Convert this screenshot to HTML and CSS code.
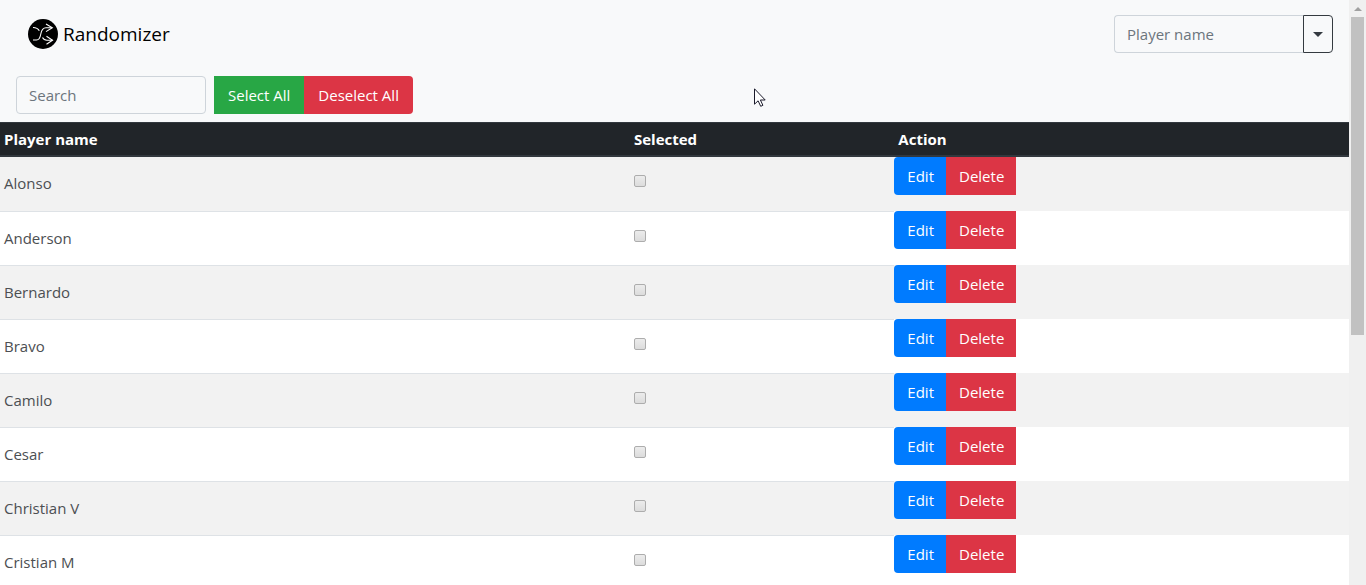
FILE: index.html
```html
<!DOCTYPE html>
<html lang="en">
<head>
<meta charset="utf-8">
<title>Randomizer</title>
<link rel="stylesheet" href="styles.css">
</head>
<body>
<div class="page">
  <header class="navbar">
    <a class="brand" href="#">
      <svg class="logo" viewBox="0 0 30 30" aria-hidden="true">
        <circle cx="15" cy="15" r="15" fill="#000"/>
        <g fill="none" stroke="#fff" stroke-width="1.100">
          <path d="M5 8.500c3 0 5 .8 6.300 3.300"/>
          <path d="M5 21h3.500c3 0 3.700-2.500 4.300-6 .7-4 2-6.200 5.200-6.200h6"/>
          <path d="M14.500 18.500c1 2 2.500 2.700 4.500 2.700h5.500"/>
          <path d="M18 5l6.300 3.800L18 12.600M18.500 17.300l6 3.900-6 4"/>
        </g>
      </svg>
      <span>Randomizer</span>
    </a>
    <form class="input-group">
      <input class="field field-joined" type="text" placeholder="Player name" aria-label="Player name">
      <button class="toggle" type="button" aria-label="More options"><span class="caret"></span></button>
    </form>
  </header>
  <div class="toolbar">
    <input class="field" type="search" placeholder="Search" aria-label="Search">
    <div class="btn-group">
      <button class="btn btn-success" type="button">Select All</button><button class="btn btn-danger btn-end" type="button">Deselect All</button>
    </div>
  </div>
  <table class="players">
    <colgroup><col class="col-name"><col class="col-selected"><col></colgroup>
    <thead>
      <tr><th scope="col">Player name</th><th scope="col">Selected</th><th scope="col">Action</th></tr>
    </thead>
    <tbody>
      <tr><td>Alonso</td><td><input class="check" type="checkbox" aria-label="Select Alonso"></td><td class="actions"><div class="btn-group"><button class="btn btn-primary" type="button">Edit</button><button class="btn btn-danger" type="button">Delete</button></div></td></tr>
      <tr><td>Anderson</td><td><input class="check" type="checkbox" aria-label="Select Anderson"></td><td class="actions"><div class="btn-group"><button class="btn btn-primary" type="button">Edit</button><button class="btn btn-danger" type="button">Delete</button></div></td></tr>
      <tr><td>Bernardo</td><td><input class="check" type="checkbox" aria-label="Select Bernardo"></td><td class="actions"><div class="btn-group"><button class="btn btn-primary" type="button">Edit</button><button class="btn btn-danger" type="button">Delete</button></div></td></tr>
      <tr><td>Bravo</td><td><input class="check" type="checkbox" aria-label="Select Bravo"></td><td class="actions"><div class="btn-group"><button class="btn btn-primary" type="button">Edit</button><button class="btn btn-danger" type="button">Delete</button></div></td></tr>
      <tr><td>Camilo</td><td><input class="check" type="checkbox" aria-label="Select Camilo"></td><td class="actions"><div class="btn-group"><button class="btn btn-primary" type="button">Edit</button><button class="btn btn-danger" type="button">Delete</button></div></td></tr>
      <tr><td>Cesar</td><td><input class="check" type="checkbox" aria-label="Select Cesar"></td><td class="actions"><div class="btn-group"><button class="btn btn-primary" type="button">Edit</button><button class="btn btn-danger" type="button">Delete</button></div></td></tr>
      <tr><td>Christian V</td><td><input class="check" type="checkbox" aria-label="Select Christian V"></td><td class="actions"><div class="btn-group"><button class="btn btn-primary" type="button">Edit</button><button class="btn btn-danger" type="button">Delete</button></div></td></tr>
      <tr><td>Cristian M</td><td><input class="check" type="checkbox" aria-label="Select Cristian M"></td><td class="actions"><div class="btn-group"><button class="btn btn-primary" type="button">Edit</button><button class="btn btn-danger" type="button">Delete</button></div></td></tr>
    </tbody>
  </table>
</div>
<div class="scrollbar" aria-hidden="true">
  <span class="scroll-arrow"></span>
  <span class="scroll-thumb"></span>
</div>
<svg class="cursor" viewBox="0 0 12 19" aria-hidden="true">
  <path d="M.5 .8v15.400l3.600-3.400 2.600 5.500 2.200-1-2.500-5.300h4.800z" fill="#fff" stroke="#1b1b2b"/>
</svg>
</body>
</html>
```
FILE: styles.css
```css
* {
  box-sizing: border-box;
}

body {
  display: flex;
  height: 100vh;
  margin: 0;
  overflow: hidden;
  background: #fff;
  color: #212529;
  font: 15px/24px "Segoe UI", "Open Sans", "Noto Sans", sans-serif;
}

.page {
  flex: 1;
  min-width: 0;
}

.navbar {
  display: flex;
  align-items: center;
  justify-content: space-between;
  padding: 15px 16px 15px 28px;
  background: #f8f9fa;
}

.brand {
  display: flex;
  align-items: center;
  gap: 5px;
  color: #000;
  font-size: 19px;
  line-height: 30px;
  text-decoration: none;
}

.logo {
  width: 30px;
  height: 30px;
}

.input-group {
  display: flex;
}

.field {
  width: 190px;
  height: 38px;
  padding: 6px 12px;
  border: 1px solid #ced4da;
  border-radius: 4px;
  background: transparent;
  color: #495057;
  font: inherit;
  appearance: none;
}

.field::placeholder {
  color: #6c757d;
  opacity: 1;
}

.field-joined {
  width: 189px;
  border-right: 0;
  border-radius: 4px 0 0 4px;
}

.toggle {
  display: flex;
  align-items: center;
  justify-content: center;
  width: 30px;
  padding: 0;
  border: 1px solid #343a40;
  border-radius: 0 4px 4px 0;
  background: transparent;
}

.caret {
  border-top: 5px solid #343a40;
  border-right: 5px solid transparent;
  border-left: 5px solid transparent;
}

.toolbar {
  display: flex;
  gap: 8px;
  padding: 8px 16px;
  background: #f8f9fa;
}

.btn-group {
  display: flex;
}

.btn {
  height: 38px;
  padding: 6px 12px 6px 13px;
  border: 0;
  color: #fff;
  font: inherit;
}

.toolbar .btn {
  padding: 6px 14px;
}

.btn-success {
  background: #28a745;
}

.btn-danger {
  background: #dc3545;
}

.btn-primary {
  border-radius: 4px 0 0 4px;
  background: #007bff;
}

.btn-end {
  border-radius: 0 4px 4px 0;
}

.players {
  width: 100%;
  border-spacing: 0;
  table-layout: fixed;
}

.col-name {
  width: 46.7%;
}

.col-selected {
  width: 19.6%;
}

.players th {
  padding: 4px;
  border-top: 1px solid #32383e;
  border-bottom: 2px solid #32383e;
  background: #212529;
  color: #fff;
  text-align: left;
}

.players td {
  padding: 0 4px 2px;
  border-top: 1px solid #dee2e6;
  color: #4c4f52;
}

.players tbody tr:nth-child(odd) {
  background: #f2f2f2;
}

.players tbody tr:first-child td {
  border-top: 0;
}

.players .actions {
  padding: 0 0 16px;
  border-top: 0;
}

.check {
  display: block;
  width: 12px;
  height: 12px;
  margin: 0 0 4px;
  border: 1px solid #adadad;
  border-radius: 2px;
  background: linear-gradient(#ececec, #dcdcdc);
  appearance: none;
}

.check:checked {
  background: #007bff;
}

.scrollbar {
  display: flex;
  flex-direction: column;
  align-items: center;
  gap: 6px;
  width: 17px;
  padding-top: 7px;
  background: #f0f0f0;
}

.scroll-arrow {
  border-right: 4px solid transparent;
  border-bottom: 4px solid #a0a0a0;
  border-left: 4px solid transparent;
}

.scroll-thumb {
  width: 13px;
  height: 55%;
  background: #c1c1c1;
}

.cursor {
  position: absolute;
  top: 88px;
  left: 754px;
  width: 12px;
  height: 19px;
}
```
